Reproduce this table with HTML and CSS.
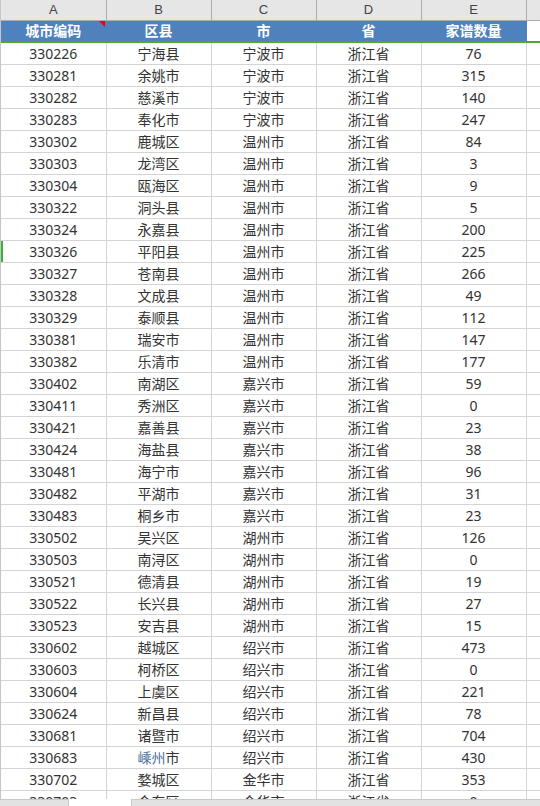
FILE: index.html
```html
<!DOCTYPE html>
<html lang="zh">
<head>
<meta charset="utf-8">
<title>Sheet</title>
<link rel="stylesheet" href="styles.css">
</head>
<body>
<div class="app">
  <div class="sheet">
    <table class="grid">
      <colgroup>
        <col class="c"><col class="c"><col class="c"><col class="c"><col class="c"><col class="cf">
      </colgroup>
      <thead>
        <tr class="letters"><th>A</th><th>B</th><th>C</th><th>D</th><th>E</th><th></th></tr>
      </thead>
      <tbody>
        <tr class="head"><td class="note">城市编码<span class="tri"></span></td><td>区县</td><td>市</td><td>省</td><td>家谱数量</td><td class="blank"></td></tr>
        <tr><td>330226</td><td>宁海县</td><td>宁波市</td><td>浙江省</td><td>76</td><td></td></tr>
        <tr><td>330281</td><td>余姚市</td><td>宁波市</td><td>浙江省</td><td>315</td><td></td></tr>
        <tr><td>330282</td><td>慈溪市</td><td>宁波市</td><td>浙江省</td><td>140</td><td></td></tr>
        <tr><td>330283</td><td>奉化市</td><td>宁波市</td><td>浙江省</td><td>247</td><td></td></tr>
        <tr><td>330302</td><td>鹿城区</td><td>温州市</td><td>浙江省</td><td>84</td><td></td></tr>
        <tr><td>330303</td><td>龙湾区</td><td>温州市</td><td>浙江省</td><td>3</td><td></td></tr>
        <tr><td>330304</td><td>瓯海区</td><td>温州市</td><td>浙江省</td><td>9</td><td></td></tr>
        <tr><td>330322</td><td>洞头县</td><td>温州市</td><td>浙江省</td><td>5</td><td></td></tr>
        <tr><td>330324</td><td>永嘉县</td><td>温州市</td><td>浙江省</td><td>200</td><td></td></tr>
        <tr class="mark"><td>330326</td><td>平阳县</td><td>温州市</td><td>浙江省</td><td>225</td><td></td></tr>
        <tr><td>330327</td><td>苍南县</td><td>温州市</td><td>浙江省</td><td>266</td><td></td></tr>
        <tr><td>330328</td><td>文成县</td><td>温州市</td><td>浙江省</td><td>49</td><td></td></tr>
        <tr><td>330329</td><td>泰顺县</td><td>温州市</td><td>浙江省</td><td>112</td><td></td></tr>
        <tr><td>330381</td><td>瑞安市</td><td>温州市</td><td>浙江省</td><td>147</td><td></td></tr>
        <tr><td>330382</td><td>乐清市</td><td>温州市</td><td>浙江省</td><td>177</td><td></td></tr>
        <tr><td>330402</td><td>南湖区</td><td>嘉兴市</td><td>浙江省</td><td>59</td><td></td></tr>
        <tr><td>330411</td><td>秀洲区</td><td>嘉兴市</td><td>浙江省</td><td>0</td><td></td></tr>
        <tr><td>330421</td><td>嘉善县</td><td>嘉兴市</td><td>浙江省</td><td>23</td><td></td></tr>
        <tr><td>330424</td><td>海盐县</td><td>嘉兴市</td><td>浙江省</td><td>38</td><td></td></tr>
        <tr><td>330481</td><td>海宁市</td><td>嘉兴市</td><td>浙江省</td><td>96</td><td></td></tr>
        <tr><td>330482</td><td>平湖市</td><td>嘉兴市</td><td>浙江省</td><td>31</td><td></td></tr>
        <tr><td>330483</td><td>桐乡市</td><td>嘉兴市</td><td>浙江省</td><td>23</td><td></td></tr>
        <tr><td>330502</td><td>吴兴区</td><td>湖州市</td><td>浙江省</td><td>126</td><td></td></tr>
        <tr><td>330503</td><td>南浔区</td><td>湖州市</td><td>浙江省</td><td>0</td><td></td></tr>
        <tr><td>330521</td><td>德清县</td><td>湖州市</td><td>浙江省</td><td>19</td><td></td></tr>
        <tr><td>330522</td><td>长兴县</td><td>湖州市</td><td>浙江省</td><td>27</td><td></td></tr>
        <tr><td>330523</td><td>安吉县</td><td>湖州市</td><td>浙江省</td><td>15</td><td></td></tr>
        <tr><td>330602</td><td>越城区</td><td>绍兴市</td><td>浙江省</td><td>473</td><td></td></tr>
        <tr><td>330603</td><td>柯桥区</td><td>绍兴市</td><td>浙江省</td><td>0</td><td></td></tr>
        <tr><td>330604</td><td>上虞区</td><td>绍兴市</td><td>浙江省</td><td>221</td><td></td></tr>
        <tr><td>330624</td><td>新昌县</td><td>绍兴市</td><td>浙江省</td><td>78</td><td></td></tr>
        <tr><td>330681</td><td>诸暨市</td><td>绍兴市</td><td>浙江省</td><td>704</td><td></td></tr>
        <tr><td>330683</td><td><span class="alt">嵊州</span>市</td><td>绍兴市</td><td>浙江省</td><td>430</td><td></td></tr>
        <tr><td>330702</td><td>婺城区</td><td>金华市</td><td>浙江省</td><td>353</td><td></td></tr>
        <tr><td>330703</td><td>金东区</td><td>金华市</td><td>浙江省</td><td>0</td><td></td></tr>
      </tbody>
    </table>
  </div>
  <div class="hbar">
    <div class="hbar-left"></div>
    <div class="hbar-gap"></div>
    <div class="hbar-rest"></div>
  </div>
</div>
</body>
</html>
```
FILE: styles.css
```css
* { box-sizing: border-box; }
html, body { margin: 0; padding: 0; background: #fff; }
body { width: 540px; height: 806px; overflow: hidden; }
.app { width: 540px; height: 806px; display: flex; flex-direction: column; }
.sheet { flex: 1; overflow: hidden; border-left: 1px solid #c6c6c6; }
.grid {
  border-collapse: collapse;
  table-layout: fixed;
  width: 630px;
  font-family: "Noto Sans", "Noto Sans CJK SC", sans-serif;
  font-size: 14px;
  color: #333;
}
.grid col.c { width: 105px; }
.grid col.cf { width: 105px; }
.grid th, .grid td {
  padding: 0;
  text-align: center;
  white-space: nowrap;
  overflow: hidden;
}
.letters th {
  height: 20px;
  background: #e6e6e6;
  border-right: 1px solid #ababab;
  border-bottom: 1px solid #ababab;
  font-family: "Liberation Sans", Arial, sans-serif;
  font-weight: normal;
  font-size: 13px;
  color: #444;
  line-height: 19px;
}
.grid tbody td {
  height: 22px;
  border-right: 1px solid #d4d4d4;
  border-bottom: 1px solid #d4d4d4;
  line-height: 21px;
}
.grid tr.head td {
  background: #4f81bd;
  color: #fff;
  font-weight: bold;
  height: 22px;
  border-right: 1px solid #4f81bd;
  border-bottom: 2px solid #4ea72e;
  line-height: 20px;
}
.grid tr.head td.blank { background: #fff; border-right: 1px solid #d4d4d4; }
.grid tr.head td.note { position: relative; }
.tri {
  position: absolute;
  top: 0;
  right: 1px;
  width: 0;
  height: 0;
  border-top: 6px solid #e8000f;
  border-left: 6px solid transparent;
}
.grid tr.mark td:first-child { box-shadow: inset 2px 0 0 #3fae3a; }
.alt { color: #4a6f9e; }
.hbar { height: 7px; flex: none; display: flex; background: #e2e2e2; border-top: 1px solid #c8c8c8; }
.hbar-left { width: 68px; }
.hbar-gap { width: 64px; background: #fff; border-left: 1px solid #c8c8c8; border-right: 1px solid #c8c8c8; margin-top: -1px; }
.hbar-rest { flex: 1; }
```
